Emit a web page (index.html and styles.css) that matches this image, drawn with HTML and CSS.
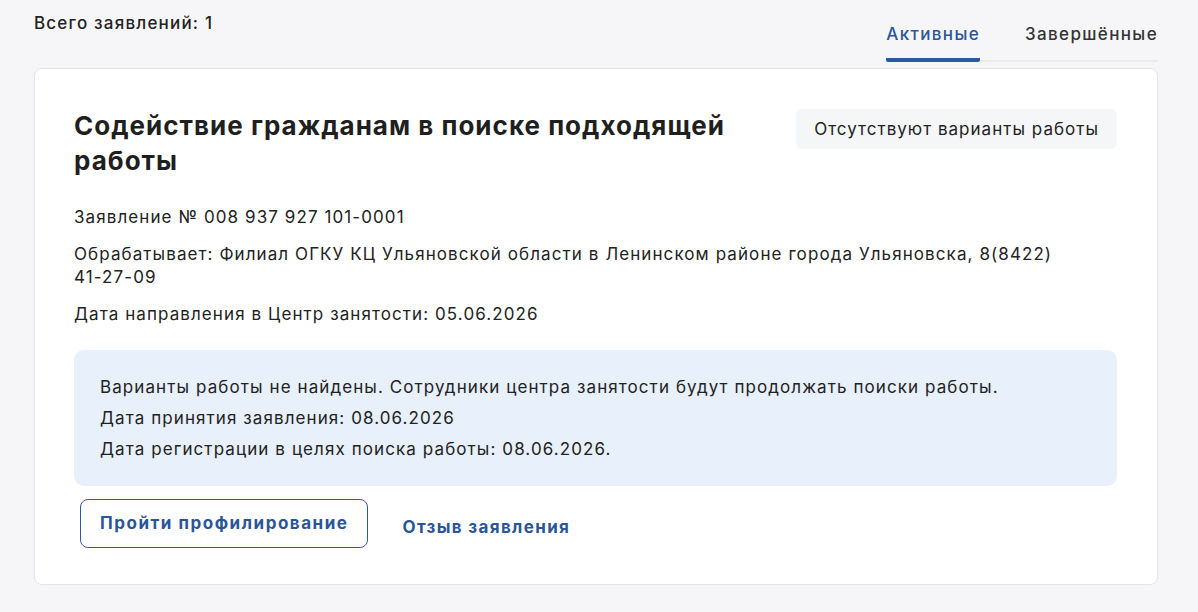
FILE: index.html
```html
<!DOCTYPE html>
<html lang="ru">
<head>
    <meta charset="UTF-8">
    <title>Заявления</title>
    <link rel="stylesheet" href="styles.css">
</head>
<body>
    <div class="page">
        <div class="top">
            <div class="total">Всего заявлений: 1</div>
            <div class="tabs">
                <span class="tab active">Активные</span>
                <span class="tab">Завершённые</span>
            </div>
        </div>

        <div class="card">
            <div class="card-head">
                <h2>Содействие гражданам в поиске подходящей работы</h2>
                <span class="status">Отсутствуют варианты работы</span>
            </div>
            <p class="info">Заявление № 008 937 927 101-0001</p>
            <p class="info">Обрабатывает: Филиал ОГКУ КЦ Ульяновской области в Ленинском районе города Ульяновска, 8(8422) 41-27-09</p>
            <p class="info">Дата направления в Центр занятости: 05.06.2026</p>

            <div class="notice">
                <p>Варианты работы не найдены. Сотрудники центра занятости будут продолжать поиски работы.</p>
                <p>Дата принятия заявления: 08.06.2026</p>
                <p>Дата регистрации в целях поиска работы: 08.06.2026.</p>
            </div>

            <div class="actions">
                <button class="button">Пройти профилирование</button>
                <a class="link" href="#">Отзыв заявления</a>
            </div>
        </div>
    </div>
</body>
</html>
```

FILE: styles.css
```css
body {
    font-family: 'Inter', 'Open Sans', sans-serif;
    letter-spacing: 0.068em;
    color: #222;
    background-color: #f6f6f8;
    margin: 0;
}
.page {
    padding: 0 40px 0 34px;
}
.top {
    display: flex;
    justify-content: space-between;
    align-items: flex-start;
    height: 68px;
}
.total {
    font-size: 17px;
    font-weight: 500;
    margin-top: 13px;
    letter-spacing: 0.07em;
}
.tabs {
    display: flex;
    gap: 45px;
    margin-top: 24px;
    border-bottom: 2px solid #e9ebef;
    height: 36px;
}
.tab {
    font-size: 17px;
    font-weight: 500;
    color: #333;
    height: 34px;
    letter-spacing: 0.08em;
}
.tab.active {
    color: #2a5598;
    border-bottom: 4px solid #2a5aa3;
    border-radius: 2px;
    margin-bottom: -2px;
}
.card {
    background: white;
    border: 1px solid #e2e4e8;
    border-radius: 8px;
    padding: 39px 40px 36px 39px;
}
.card-head {
    display: flex;
    justify-content: space-between;
    align-items: flex-start;
    margin-bottom: 28px;
}
.card-head h2 {
    font-size: 26px;
    font-weight: 700;
    line-height: 35px;
    letter-spacing: 0.039em;
    margin: 0;
    max-width: 700px;
    color: #1f1f1f;
}
.status {
    background: #f5f6f8;
    border-radius: 6px;
    padding: 9px 18px;
    font-size: 17px;
    line-height: 22px;
    margin-top: 1px;
    letter-spacing: 0.06em;
}
.info {
    font-size: 17px;
    line-height: 23px;
    margin: 0 0 14px;
    max-width: 1000px;
}
.notice {
    background: #e7f0fb;
    border-radius: 10px;
    padding: 26px 26px 25px;
    margin-top: 24px;
}
.notice p {
    font-size: 17px;
    line-height: 23px;
    margin: 0 0 8px;
}
.notice p:last-child {
    margin-bottom: 0;
}
.actions {
    display: flex;
    align-items: center;
    gap: 34px;
    margin-top: 13px;
    padding-left: 6px;
}
.button {
    background: white;
    border: 1px solid #2a5aa3;
    border-radius: 8px;
    color: #2a5598;
    font-family: inherit;
    letter-spacing: 0.09em;
    font-size: 17px;
    font-weight: 700;
    padding: 13px 19px 14px;
    cursor: pointer;
}
.link {
    color: #2a5598;
    font-size: 17px;
    font-weight: 700;
    letter-spacing: 0.08em;
    text-decoration: none;
    margin-top: 7px;
}
```
